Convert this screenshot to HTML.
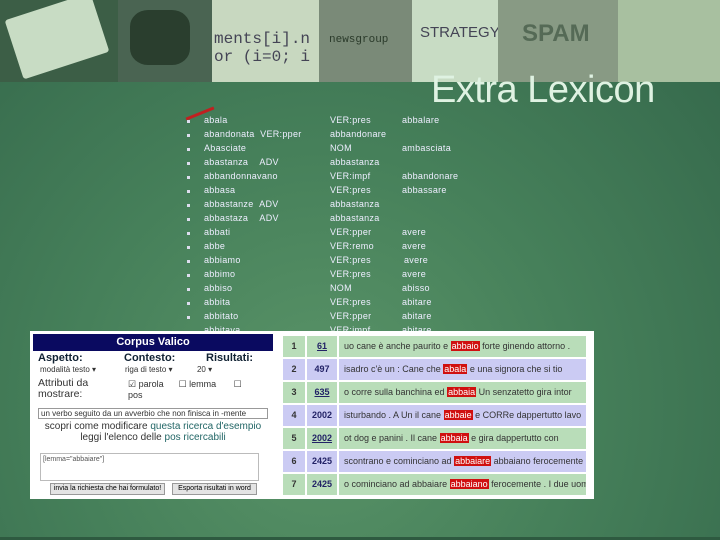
<!DOCTYPE html><html><head><style>
*{margin:0;padding:0;box-sizing:border-box}
body{width:720px;height:540px;overflow:hidden;position:relative;font-family:"Liberation Sans",sans-serif;background:radial-gradient(ellipse at 45% 75%,#5a9468 0%,#46805a 45%,#33664a 100%)}
.hd{position:absolute;top:0;height:82px;overflow:hidden}
.l{position:absolute;font-size:9px;color:#eef;letter-spacing:.3px;white-space:nowrap}
.b{position:absolute;width:3px;height:3px;background:#dde;left:187px}
.t{position:absolute;left:283px;width:303px;font-size:9px;color:#333}
.t div{position:absolute;height:21px;top:0;line-height:21px;white-space:nowrap;overflow:hidden}
.h{background:#d01010;color:#fff;padding:0 1px}
</style></head><body>
<div class="hd" style="left:0;width:118px;background:#3c5e46"></div>
<div style="position:absolute;left:12px;top:5px;width:90px;height:62px;background:#c8dcc4;transform:rotate(-18deg);border-radius:3px"></div>
<div class="hd" style="left:118px;width:94px;background:#4a6452"></div>
<div style="position:absolute;left:130px;top:10px;width:60px;height:55px;background:#2a3e2e;border-radius:30%"></div>
<div class="hd" style="left:212px;width:107px;background:#c8d8c0"><div style="font:16px 'Liberation Mono',monospace;color:#445;padding:30px 0 0 2px;line-height:18px;white-space:nowrap">ments[i].n<br>or (i=0; i</div></div>
<div class="hd" style="left:319px;width:93px;background:#7a8a78"><div style="font:11px 'Liberation Mono',monospace;color:#2a3a2a;padding:34px 10px">newsgroup</div></div>
<div class="hd" style="left:412px;width:86px;background:#c8dcc4"><div style="font:15px 'Liberation Sans';color:#445;padding:24px 8px">STRATEGY</div></div>
<div class="hd" style="left:498px;width:120px;background:#889a84"><div style="font:bold 24px 'Liberation Sans';color:#556a56;padding:20px 24px">SPAM</div></div>
<div class="hd" style="left:618px;width:102px;background:#a8c0a0"></div>
<div style="position:absolute;left:431px;top:69px;font-size:38px;color:#dff2e2;letter-spacing:-.5px;white-space:nowrap">Extra Lexicon</div>
<div style="position:absolute;left:185px;top:112px;width:30px;height:3px;background:#c02020;transform:rotate(-22deg)"></div>

<div class="b" style="top:120px"></div><div class="l" style="left:204px;top:115px">abala</div><div class="l" style="left:330px;top:115px">VER:pres</div><div class="l" style="left:402px;top:115px">abbalare</div>
<div class="b" style="top:134px"></div><div class="l" style="left:204px;top:129px">abandonata&nbsp;&nbsp;VER:pper</div><div class="l" style="left:330px;top:129px">abbandonare</div>
<div class="b" style="top:148px"></div><div class="l" style="left:204px;top:143px">Abasciate</div><div class="l" style="left:330px;top:143px">NOM</div><div class="l" style="left:402px;top:143px">ambasciata</div>
<div class="b" style="top:162px"></div><div class="l" style="left:204px;top:157px">abastanza&nbsp;&nbsp;&nbsp;&nbsp;ADV</div><div class="l" style="left:330px;top:157px">abbastanza</div>
<div class="b" style="top:176px"></div><div class="l" style="left:204px;top:171px">abbandonnavano</div><div class="l" style="left:330px;top:171px">VER:impf</div><div class="l" style="left:402px;top:171px">abbandonare</div>
<div class="b" style="top:190px"></div><div class="l" style="left:204px;top:185px">abbasa</div><div class="l" style="left:330px;top:185px">VER:pres</div><div class="l" style="left:402px;top:185px">abbassare</div>
<div class="b" style="top:204px"></div><div class="l" style="left:204px;top:199px">abbastanze&nbsp;&nbsp;ADV</div><div class="l" style="left:330px;top:199px">abbastanza</div>
<div class="b" style="top:218px"></div><div class="l" style="left:204px;top:213px">abbastaza&nbsp;&nbsp;&nbsp;&nbsp;ADV</div><div class="l" style="left:330px;top:213px">abbastanza</div>
<div class="b" style="top:232px"></div><div class="l" style="left:204px;top:227px">abbati</div><div class="l" style="left:330px;top:227px">VER:pper</div><div class="l" style="left:402px;top:227px">avere</div>
<div class="b" style="top:246px"></div><div class="l" style="left:204px;top:241px">abbe</div><div class="l" style="left:330px;top:241px">VER:remo</div><div class="l" style="left:402px;top:241px">avere</div>
<div class="b" style="top:260px"></div><div class="l" style="left:204px;top:255px">abbiamo</div><div class="l" style="left:330px;top:255px">VER:pres</div><div class="l" style="left:404px;top:255px">avere</div>
<div class="b" style="top:274px"></div><div class="l" style="left:204px;top:269px">abbimo</div><div class="l" style="left:330px;top:269px">VER:pres</div><div class="l" style="left:402px;top:269px">avere</div>
<div class="b" style="top:288px"></div><div class="l" style="left:204px;top:283px">abbiso</div><div class="l" style="left:330px;top:283px">NOM</div><div class="l" style="left:402px;top:283px">abisso</div>
<div class="b" style="top:302px"></div><div class="l" style="left:204px;top:297px">abbita</div><div class="l" style="left:330px;top:297px">VER:pres</div><div class="l" style="left:402px;top:297px">abitare</div>
<div class="b" style="top:316px"></div><div class="l" style="left:204px;top:311px">abbitato</div><div class="l" style="left:330px;top:311px">VER:pper</div><div class="l" style="left:402px;top:311px">abitare</div>
<div class="l" style="left:204px;top:325px">abbitava</div><div class="l" style="left:330px;top:325px">VER:impf</div><div class="l" style="left:402px;top:325px">abitare</div>

<div style="position:absolute;left:30px;top:331px;width:564px;height:168px;background:#fff"></div>
<div style="position:absolute;left:33px;top:334px;width:240px;height:17px;background:#0a0a60;color:#fff;font:bold 11px 'Liberation Sans';text-align:center;line-height:17px">Corpus Valico</div>
<div style="position:absolute;left:38px;top:352px;font:bold 11px 'Liberation Sans';color:#123">Aspetto:</div>
<div style="position:absolute;left:124px;top:352px;font:bold 11px 'Liberation Sans';color:#123">Contesto:</div>
<div style="position:absolute;left:206px;top:352px;font:bold 11px 'Liberation Sans';color:#123">Risultati:</div>
<div style="position:absolute;left:40px;top:365px;font-size:8px;color:#333;white-space:nowrap">modalità testo ▾&nbsp;&nbsp;&nbsp;&nbsp;&nbsp;&nbsp;&nbsp;&nbsp;&nbsp;&nbsp;&nbsp;&nbsp;&nbsp;riga di testo ▾&nbsp;&nbsp;&nbsp;&nbsp;&nbsp;&nbsp;&nbsp;&nbsp;&nbsp;&nbsp;&nbsp;20 ▾</div>
<div style="position:absolute;left:38px;top:378px;font-size:10.5px;color:#333;line-height:11px">Attributi da<br>mostrare:</div>
<div style="position:absolute;left:128px;top:379px;font-size:9px;color:#333;white-space:nowrap">☑ parola&nbsp;&nbsp;&nbsp;&nbsp;&nbsp;&nbsp;☐ lemma&nbsp;&nbsp;&nbsp;&nbsp;&nbsp;&nbsp;&nbsp;☐<br>pos</div>
<div style="position:absolute;left:38px;top:408px;width:230px;height:11px;border:1px solid #999;font-size:8px;color:#333;line-height:9px;padding-left:2px;white-space:nowrap;overflow:hidden">un verbo seguito da un avverbio che non finisca in -mente</div>
<div style="position:absolute;left:33px;top:421px;width:240px;text-align:center;font-size:10px;color:#333;line-height:11px;white-space:nowrap">scopri come modificare <span style="color:#266">questa ricerca d'esempio</span><br>leggi l'elenco delle <span style="color:#266">pos ricercabili</span></div>
<div style="position:absolute;left:40px;top:453px;width:219px;height:28px;border:1px solid #bbb;font-size:7px;color:#555;padding:2px">[lemma="abbaiare"]</div>
<div style="position:absolute;left:50px;top:483px;width:115px;height:12px;background:#e4e4e4;border:1px solid #999;font-size:7px;line-height:10px;text-align:center;white-space:nowrap;overflow:hidden">invia la richiesta che hai formulato!</div>
<div style="position:absolute;left:172px;top:483px;width:85px;height:12px;background:#e4e4e4;border:1px solid #999;font-size:7px;line-height:10px;text-align:center;white-space:nowrap;overflow:hidden">Esporta risultati in word</div>

<div class="t" style="top:336px;height:21px"><div style="left:0;width:22px;background:#b9ddb9;text-align:center;font-weight:bold">1</div><div style="left:24px;width:30px;background:#b9ddb9;color:#226;text-decoration:underline;font-weight:bold;text-align:center">61</div><div style="left:56px;width:247px;background:#b9ddb9;padding-left:5px">uo cane è anche paurito e <span class="h">abbaio</span> forte ginendo attorno .</div></div>
<div class="t" style="top:359px;height:21px"><div style="left:0;width:22px;background:#cbcbf3;text-align:center;font-weight:bold">2</div><div style="left:24px;width:30px;background:#cbcbf3;color:#226;font-weight:bold;text-align:center">497</div><div style="left:56px;width:247px;background:#cbcbf3;padding-left:5px">isadro c'è un : Cane che <span class="h">abala</span> e una signora che si tio</div></div>
<div class="t" style="top:382px;height:21px"><div style="left:0;width:22px;background:#b9ddb9;text-align:center;font-weight:bold">3</div><div style="left:24px;width:30px;background:#b9ddb9;color:#226;text-decoration:underline;font-weight:bold;text-align:center">635</div><div style="left:56px;width:247px;background:#b9ddb9;padding-left:5px">o corre sulla banchina ed <span class="h">abbaia</span> Un senzatetto gira intor</div></div>
<div class="t" style="top:405px;height:21px"><div style="left:0;width:22px;background:#cbcbf3;text-align:center;font-weight:bold">4</div><div style="left:24px;width:30px;background:#cbcbf3;color:#226;font-weight:bold;text-align:center">2002</div><div style="left:56px;width:247px;background:#cbcbf3;padding-left:5px">isturbando . A Un il cane <span class="h">abbaie</span> e CORRe dappertutto lavo</div></div>
<div class="t" style="top:428px;height:21px"><div style="left:0;width:22px;background:#b9ddb9;text-align:center;font-weight:bold">5</div><div style="left:24px;width:30px;background:#b9ddb9;color:#226;text-decoration:underline;font-weight:bold;text-align:center">2002</div><div style="left:56px;width:247px;background:#b9ddb9;padding-left:5px">ot dog e panini . Il cane <span class="h">abbaia</span> e gira dappertutto con</div></div>
<div class="t" style="top:451px;height:21px"><div style="left:0;width:22px;background:#cbcbf3;text-align:center;font-weight:bold">6</div><div style="left:24px;width:30px;background:#cbcbf3;color:#226;font-weight:bold;text-align:center">2425</div><div style="left:56px;width:247px;background:#cbcbf3;padding-left:5px">scontrano e cominciano ad <span class="h">abbaiare</span> abbaiano ferocemente . I</div></div>
<div class="t" style="top:474px;height:21px"><div style="left:0;width:22px;background:#b9ddb9;text-align:center;font-weight:bold">7</div><div style="left:24px;width:30px;background:#b9ddb9;color:#226;font-weight:bold;text-align:center">2425</div><div style="left:56px;width:247px;background:#b9ddb9;padding-left:5px">o cominciano ad abbaiare <span class="h">abbaiano</span> ferocemente . I due uomi</div></div>
<div style="position:absolute;left:0;top:537px;width:720px;height:3px;background:#2e5a40"></div>
</body></html>
